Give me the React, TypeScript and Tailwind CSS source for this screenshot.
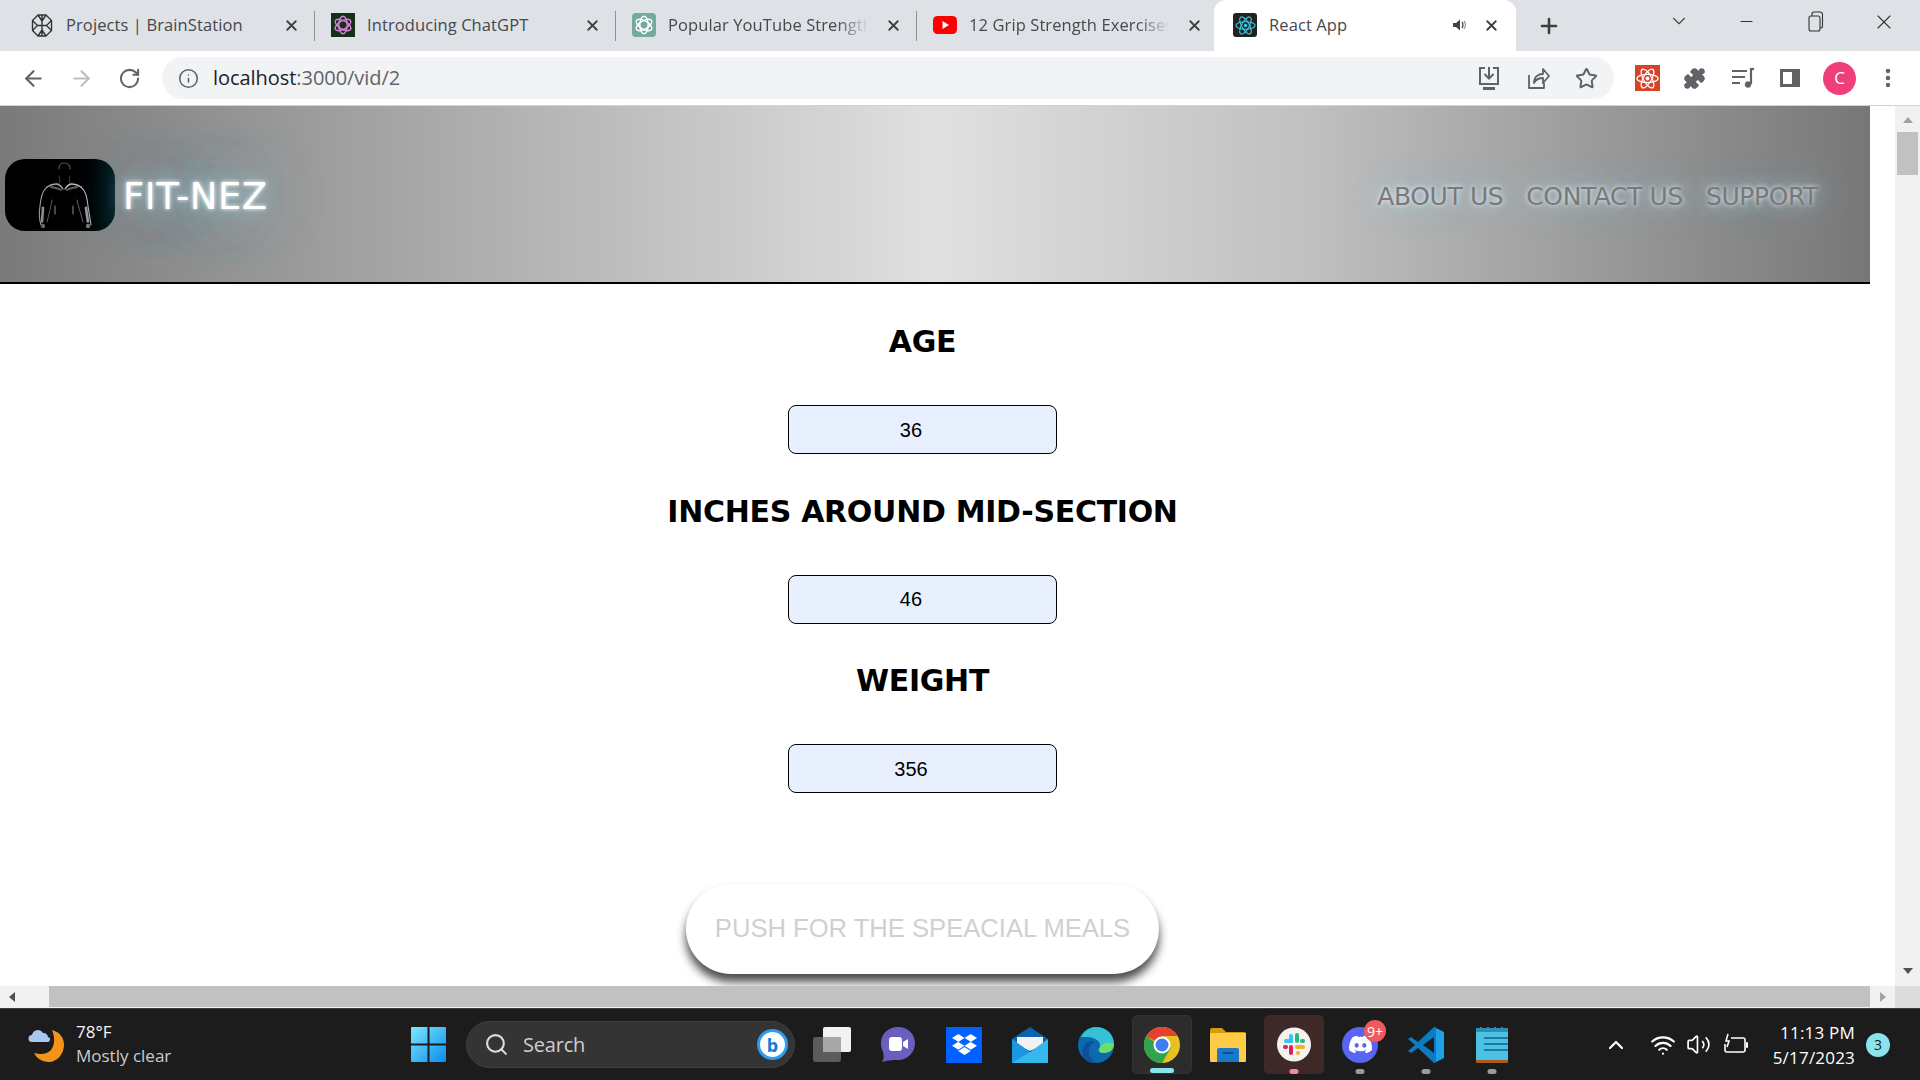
import React from "react";
import { ArrowLeft, ArrowRight, RotateCw, Info, Star, Puzzle, EllipsisVertical, X, Plus, ChevronDown, Minus, Search, ChevronUp, Wifi, Volume2 } from "lucide-react";
import { FaDropbox, FaDiscord } from "react-icons/fa";

function OpenAIKnot({ color, size = 20 }: { color: string; size?: number }) {
  return (
    <svg width={size} height={size} viewBox="0 0 24 24" fill="none" stroke={color} strokeWidth="1.7">
      <ellipse cx="12" cy="12" rx="5" ry="10.5" />
      <ellipse cx="12" cy="12" rx="5" ry="10.5" transform="rotate(60 12 12)" />
      <ellipse cx="12" cy="12" rx="5" ry="10.5" transform="rotate(120 12 12)" />
    </svg>
  );
}

function BrainIcon() {
  return (
    <svg width="25" height="25" viewBox="0 0 24 24" fill="none" stroke="#333" strokeWidth="1.4" strokeLinejoin="round">
      <path d="M8 1.500h8l5.500 5.500v10L16 22.500H8L2.500 17V7z" />
      <path d="M12 1.500v21M8 1.500l4 6 4-6M2.500 7l5 5-5 5M21.500 7l-5 5 5 5M8 22.500l4-6 4 6M7.500 12h9" />
    </svg>
  );
}

function ReactIcon({ size = 17, color = "#3fc3e0" }: { size?: number; color?: string }) {
  return (
    <svg width={size} height={size} viewBox="0 0 24 24" fill="none" stroke={color} strokeWidth="1.3">
      <ellipse cx="12" cy="12" rx="11" ry="4.3" />
      <ellipse cx="12" cy="12" rx="11" ry="4.3" transform="rotate(60 12 12)" />
      <ellipse cx="12" cy="12" rx="11" ry="4.3" transform="rotate(120 12 12)" />
      <circle cx="12" cy="12" r="2" fill={color} stroke="none" />
    </svg>
  );
}

function Tab({ icon, title, active, fade, sound }: { icon: React.ReactNode; title: string; active?: boolean; fade?: boolean; sound?: boolean }) {
  return (
    <div className={`relative flex h-[51px] shrink-0 items-center pb-[1px] ${active ? "w-[302px] rounded-t-[12px] bg-white pl-[19px] pr-[16px]" : "w-[301px] pl-[16px] pr-[15px]"}`}>
      <span className="flex h-[24px] w-[24px] shrink-0 items-center justify-center">{icon}</span>
      <span className={`ml-[12px] min-w-0 flex-1 overflow-hidden whitespace-nowrap text-[16.5px] text-[#45484c] [font-family:'Open_Sans',sans-serif] [letter-spacing:0.1px] ${fade ? "[mask-image:linear-gradient(to_right,black_80%,transparent_95%)]" : ""}`}>{title}</span>
      {sound && (
        <svg className="mr-[9px]" width="16" height="16" viewBox="0 0 16 16" fill="#444">
          <path d="M1 6h3l4-3.500v11L4 10H1z" />
          <path d="M10 5c1.200 1.500 1.200 4.500 0 6" fill="none" stroke="#444" strokeWidth="1.300" />
          <path d="M12 4c1.800 2.200 1.800 5.800 0 8" fill="none" stroke="#999" strokeWidth="1.200" />
        </svg>
      )}
      <X size={17} strokeWidth={2.6} className="ml-[6px] shrink-0 text-[#3c4043]" />
    </div>
  );
}

function TabBar() {
  return (
    <div className="flex h-[51px] shrink-0 items-start bg-[#dee1e6] pl-[14px]">
      <Tab icon={<BrainIcon />} title="Projects | BrainStation" />
      <div className="mt-[11px] h-[30px] w-px shrink-0 -ml-px bg-[#8f9295]" />
      <Tab
        icon={<span className="flex h-[24px] w-[24px] items-center justify-center bg-[#17301a]"><OpenAIKnot color="#d982d8" /></span>}
        title="Introducing ChatGPT"
      />
      <div className="mt-[11px] h-[30px] w-px shrink-0 -ml-px bg-[#8f9295]" />
      <Tab
        icon={<span className="flex h-[24px] w-[24px] items-center justify-center rounded-[4px] bg-[#74aa9c]"><OpenAIKnot color="#fff" /></span>}
        title="Popular YouTube Strength"
        fade
      />
      <div className="mt-[11px] h-[30px] w-px shrink-0 -ml-px bg-[#8f9295]" />
      <Tab
        icon={
          <svg width="24" height="18" viewBox="0 0 24 18">
            <rect width="24" height="18" rx="4.500" fill="#f00" />
            <path d="M9.500 5l6.500 4-6.500 4z" fill="#fff" />
          </svg>
        }
        title="12 Grip Strength Exercises"
        fade
      />
      <div className="-ml-[4px]">
        <Tab
          icon={<span className="flex h-[24px] w-[24px] items-center justify-center rounded-[3px] bg-[#222]"><ReactIcon size={21} /></span>}
          title="React App"
          active
          sound
        />
      </div>
      <Plus size={24} strokeWidth={2.6} className="ml-[21px] mt-[14px] shrink-0 text-[#3c4043]" />
      <ChevronDown size={22} strokeWidth={1.2} className="ml-[107px] mt-[10px] shrink-0 text-[#444]" />
      <Minus size={19} strokeWidth={1.3} className="ml-[47px] mt-[12px] shrink-0 text-[#333]" />
      <svg className="ml-[52px] mt-[11px] shrink-0" width="16" height="22" viewBox="0 0 16 22" fill="none" stroke="#333" strokeWidth="1.100">
        <rect x="1" y="5" width="11" height="15" rx="2" />
        <path d="M4 5V3a2 2 0 0 1 2-2h6a2.500 2.500 0 0 1 2.500 2.500V15a2 2 0 0 1-2 2" />
      </svg>
      <X size={24} strokeWidth={1.1} className="ml-[48px] mt-[10px] shrink-0 text-[#333]" />
    </div>
  );
}

function ToolBar() {
  const g = "#5f6368";
  return (
    <div className="flex h-[54px] shrink-0 items-center bg-white">
      <ArrowLeft size={25} strokeWidth={2} className="ml-[21px] shrink-0 text-[#5f6368]" />
      <ArrowRight size={25} strokeWidth={2} className="ml-[23px] shrink-0 text-[#bcbec1]" />
      <RotateCw size={23} strokeWidth={2.1} className="ml-[24px] shrink-0 text-[#5f6368]" />
      <div className="ml-[21px] flex h-[42px] w-[1452px] shrink-0 items-center rounded-full bg-[#f1f3f4] pl-[16px] pr-[16px]">
        <Info size={21} strokeWidth={1.8} className="shrink-0 text-[#5f6368]" />
        <span className="ml-[14px] text-[20px] text-[#202124] [font-family:'Open_Sans',sans-serif] [letter-spacing:-0.05px]">
          localhost<span className="text-[#5f6368]">:3000/vid/2</span>
        </span>
        <div className="ml-auto flex items-center gap-[25px]">
          <svg width="24" height="26" viewBox="0 0 24 26" fill="none" stroke={g} strokeWidth="2">
            <path d="M8 3H3v16h18V3h-5" />
            <path d="M12 2v11M7.500 9l4.500 4.500L16.500 9" />
            <path d="M6 23.500h12" strokeWidth="3" />
          </svg>
          <svg width="24" height="24" viewBox="0 0 24 24" fill="none" stroke={g} strokeWidth="1.800" strokeLinejoin="round">
            <path d="M3 9v13h15v-5" />
            <path d="M8 17c0-6 4-9 9-9V3l6 7-6 7v-5c-4 0-7 1-9 5z" />
          </svg>
          <Star size={23} strokeWidth={2.1} className="text-[#5f6368]" />
        </div>
      </div>
      <span className="ml-[21px] flex h-[26px] w-[25px] shrink-0 items-center justify-center bg-[#d9412b]">
        <ReactIcon size={23} color="#fff" />
      </span>
      <Puzzle size={23} fill="#5f6368" strokeWidth={1.5} className="ml-[23px] shrink-0 text-[#5f6368]" />
      <svg className="ml-[25px] shrink-0" width="24" height="24" viewBox="0 0 24 24" fill="none" stroke={g} strokeWidth="2.200">
        <path d="M1 5h15M1 11h13M1 17h8" />
        <path d="M20 3v15" />
        <circle cx="17" cy="18.500" r="3" fill={g} strokeWidth="0.500" />
        <path d="M19 3h4" />
      </svg>
      <svg className="ml-[24px] shrink-0" width="22" height="22" viewBox="0 0 22 22">
        <path fillRule="evenodd" fill="#5f6368" d="M1 2h20v18H1zM4 5v12h9V5z" />
      </svg>
      <span className="ml-[22px] flex h-[33px] w-[33px] shrink-0 items-center justify-center rounded-full bg-[#ee3f7b] text-[17px] text-white [font-family:'Open_Sans',sans-serif]">C</span>
      <EllipsisVertical size={24} strokeWidth={2.5} className="ml-[20px] shrink-0 text-[#5f6368]" />
    </div>
  );
}

function LogoMan() {
  return (
    <div className="h-[72px] w-[110px] shrink-0 overflow-hidden rounded-[20px] bg-gradient-to-r from-black from-60% to-[#031f22]">
      <svg width="110" height="72" viewBox="0 0 110 72" fill="none" strokeLinecap="round">
        <path d="M54 10c0-5 3-6 5-6 3 0 6 1 6 6" stroke="#555" strokeWidth="1.200" />
        <path d="M54 17l1 5-2 4M65 17l-1 5 2 4" stroke="#3d3d3d" strokeWidth="1" />
        <path d="M42 28c3-2 6-3 9-3 2 0 5 2 7 5" stroke="#a8a8a8" strokeWidth="1.300" />
        <path d="M76 28c-3-2-6-3-9-3-2 0-5 2-7 5" stroke="#c0c0c0" strokeWidth="1.300" />
        <path d="M46 28c3 1 7 1 10 3M72 28c-3 1-7 1-10 3" stroke="#5c5c5c" strokeWidth="2" />
        <path d="M42 28c-5 4-6 11-7 19-1 6-1 13 1 19" stroke="#9a9a9a" strokeWidth="1.100" />
        <path d="M76 28c5 4 6 11 7 19 1 6 2 13 3 19" stroke="#b5b5b5" strokeWidth="1.100" />
        <path d="M38 49l-1 14" stroke="#8c8c8c" strokeWidth="2.800" strokeDasharray="1 1.500" />
        <path d="M81 49l2 14" stroke="#9a9a9a" strokeWidth="2.800" strokeDasharray="1 1.500" />
        <path d="M47 41c-1 6-3 14-5 22" stroke="#5a5a5a" strokeWidth="1" />
        <path d="M72 41c1 6 4 14 6 22" stroke="#666" strokeWidth="1" />
        <path d="M50 47v8M68 47v8" stroke="#a0a0a0" strokeWidth="0.900" />
        <circle cx="38" cy="67" r="2.200" fill="#666" />
        <circle cx="83" cy="67" r="2.200" fill="#777" />
      </svg>
    </div>
  );
}

function Header() {
  return (
    <header className="flex h-[178px] w-[1870px] shrink-0 items-center justify-between border-b-[2px] border-black bg-[linear-gradient(to_right,#7a7a7a,#e0e0e0_50%,#c0c0c0_70%,#777777)] pb-[4px] pl-[5px] pr-[52px] pt-[5px] [font-family:'DejaVu_Sans',sans-serif]">
      <div className="flex items-center">
        <LogoMan />
        <span className="ml-[8px] mt-[4px] text-[37px] text-white [letter-spacing:0.5px] [text-shadow:0_0_4px_#ffffff,0_0_20px_#a8d8e8,0_0_60px_#6fa0b0,0_0_60px_#6fa0b0]">FIT-NEZ</span>
      </div>
      <nav className="mt-[4px] flex gap-[23px] text-[25px] text-[#7d7878] [letter-spacing:-0.4px] [text-shadow:0_0_5px_#e8f4f8,0_0_20px_#a8d4e6,0_0_50px_#8fbfd0]">
        <span>ABOUT US</span>
        <span>CONTACT US</span>
        <span>SUPPORT</span>
      </nav>
    </header>
  );
}

function Field({ label, value }: { label: string; value: string }) {
  return (
    <div className="flex h-[169.500px] shrink-0 flex-col items-center">
      <h2 className="flex h-[60px] items-end text-[30px] font-bold leading-[36px] text-black [font-family:'DejaVu_Sans',sans-serif] [letter-spacing:-0.3px]">{label}</h2>
      <div className="mt-[45px] flex h-[49px] w-[269px] items-center justify-center rounded-[8px] border border-black bg-[#e8f0fe] pr-[23px] text-[20px] text-black [font-family:'Liberation_Sans',sans-serif]">{value}</div>
    </div>
  );
}

function Page() {
  return (
    <div className="flex min-w-0 flex-1 flex-col overflow-hidden bg-white">
      <Header />
      <div className="flex w-[1845px] flex-col items-center">
        <div className="flex flex-col pt-[16px]">
          <Field label="AGE" value="36" />
          <Field label="INCHES AROUND MID-SECTION" value="46" />
          <Field label="WEIGHT" value="356" />
        </div>
        <button className="mt-[75px] flex h-[90px] w-[473px] shrink-0 items-center justify-center rounded-full bg-white text-[25.6px] text-[#d0d0d0] shadow-[0_8px_10px_rgba(0,0,0,0.7)] [font-family:'Liberation_Sans',sans-serif]">
          PUSH FOR THE SPEACIAL MEALS
        </button>
      </div>
    </div>
  );
}

function VScrollbar() {
  return (
    <div className="flex w-[25px] shrink-0 flex-col items-center bg-[#f1f1f1]">
      <div className="mt-[11px] h-0 w-0 border-x-[5px] border-b-[6px] border-x-transparent border-b-[#a3a3a3]" />
      <div className="mt-[9px] h-[43px] w-[21px] shrink-0 bg-[#c1c1c1]" />
      <div className="mt-auto mb-[12px] h-0 w-0 border-x-[5px] border-t-[6px] border-x-transparent border-t-[#505050]" />
    </div>
  );
}

function HScrollbar() {
  return (
    <div className="flex h-[22px] shrink-0 items-stretch bg-[#f1f1f1]">
      <div className="flex w-[49px] shrink-0 items-center pl-[9px]">
        <div className="h-0 w-0 border-y-[5px] border-r-[6px] border-y-transparent border-r-[#505050]" />
      </div>
      <div className="mb-px w-[1821px] shrink-0 bg-[#c1c1c1]" />
      <div className="flex w-[25px] shrink-0 items-center pl-[10px]">
        <div className="h-0 w-0 border-y-[5px] border-l-[6px] border-y-transparent border-l-[#a3a3a3]" />
      </div>
      <div className="w-[25px] shrink-0 bg-[#dcdcdc]" />
    </div>
  );
}

function Weather() {
  return (
    <svg width="36" height="34" viewBox="0 0 36 34">
      <path d="M24 2c8 2 12 8 12 15 0 9-7 17-15 17-6 0-12-3-15-9 8 2 13 1 17-3 4-5 4-13 1-20z" fill="#f2941c" />
      <path d="M4 14a3.500 3.500 0 0 1 0-7 6 6 0 0 1 11-2 4.500 4.500 0 0 1 5 4 2.500 2.500 0 0 1-1 5z" fill="#a9c8f0" />
    </svg>
  );
}

function WinLogo() {
  return (
    <svg width="35" height="35" viewBox="0 0 35 35">
      <defs>
        <linearGradient id="w" x1="0" y1="0" x2="1" y2="1">
          <stop offset="0" stopColor="#7ce8fb" />
          <stop offset="1" stopColor="#0a8cf0" />
        </linearGradient>
      </defs>
      <path fill="url(#w)" d="M0 1a1 1 0 0 1 1-1h15.500v16.500H0zM18.500 0H34a1 1 0 0 1 1 1v15.500H18.500zM0 18.500h16.500V35H1a1 1 0 0 1-1-1zM18.500 18.500H35V34a1 1 0 0 1-1 1H18.500z" />
    </svg>
  );
}

function TaskView() {
  return (
    <svg width="38" height="35" viewBox="0 0 38 35">
      <rect x="0" y="10" width="28" height="25" rx="3" fill="#5c5c5c" />
      <rect x="10" y="0" width="28" height="25" rx="2" fill="#f2f2f2" />
      <rect x="10" y="10" width="18" height="15" fill="#a8a8a8" />
    </svg>
  );
}

function Teams() {
  return (
    <svg width="34" height="35" viewBox="0 0 34 35">
      <path d="M17 0c10 0 17 7 17 16 0 10-8 17-17 17-4 0-9 0-16 2 2-3 2-6 1-10C0 21 0 18 0 16 0 7 7 0 17 0z" fill="#6a5fbf" />
      <rect x="8" y="10" width="13" height="14" rx="3" fill="#fff" />
      <path d="M22 15l5-3v10l-5-3z" fill="#fff" />
    </svg>
  );
}

function Mail() {
  return (
    <svg width="36" height="36" viewBox="0 0 36 36">
      <path d="M0 12L18 0l18 12v6H0z" fill="#0b63b0" />
      <path d="M5 10h26v8L18 24 5 18z" fill="#f2f2f2" />
      <path d="M0 12l18 13 18-13v24H0z" fill="#35b8ee" />
      <path d="M0 36V12l18 13z" fill="#1c96e0" />
    </svg>
  );
}

function Edge() {
  return (
    <svg width="36" height="36" viewBox="0 0 36 36">
      <circle cx="18" cy="18" r="18" fill="#0c69b0" />
      <path d="M3 10C7 2 14 0 18 0c10 0 18 7 18 17 0 5-4 9-10 9-4 0-6-2-5-4 2-3 1-7-2-9-6-4-12-3-16-3z" fill="#36c2d4" />
      <path d="M36 17c0 5-4 9-10 9-4 0-6-2-5-4 2-3 5-9 15-5z" fill="#6fdc6a" />
      <path d="M14 36c-7-1-11-8-9-15 2-5 7-8 12-6-5 2-7 6-6 11 1 4 3 8 8 10z" fill="#0f4f9a" />
    </svg>
  );
}

function Chrome() {
  return (
    <svg width="36" height="36" viewBox="0 0 36 36">
      <circle cx="18" cy="18" r="18" fill="#e8c01f" />
      <path d="M18 18L2.400 9A18 18 0 0 1 33.600 9H18z" fill="#e5412f" />
      <path d="M2.400 9A18 18 0 0 0 18 36l9-15.600H18z" fill="#2ea44f" />
      <path d="M2.400 9L11 24h7z" fill="#2ea44f" />
      <circle cx="18" cy="18" r="8.500" fill="#fff" />
      <circle cx="18" cy="18" r="6.500" fill="#3d7ef0" />
    </svg>
  );
}

function Folder() {
  return (
    <svg width="36" height="36" viewBox="0 0 36 36">
      <path d="M0 3a2 2 0 0 1 2-2h10l4 4h18a2 2 0 0 1 2 2v4H0z" fill="#d99a0b" />
      <rect y="6" width="36" height="29" rx="1" fill="#fdcb47" />
      <path d="M7 35V23a2 2 0 0 1 2-2h18a2 2 0 0 1 2 2v12z" fill="#1879c9" />
      <rect x="13" y="25" width="10" height="2" fill="#0c4f8c" />
    </svg>
  );
}

function Slack() {
  return (
    <svg width="34" height="35" viewBox="0 0 34 35">
      <circle cx="17" cy="17.500" r="17" fill="#f2f2ee" />
      <g strokeWidth="4" strokeLinecap="round" fill="none">
        <path d="M14 9v5H9" stroke="#36c5f0" />
        <path d="M20 8v6" stroke="#2eb67d" />
        <path d="M25 14h1" stroke="#2eb67d" />
        <path d="M20 20h6" stroke="#ecb22e" />
        <path d="M21 26v0" stroke="#ecb22e" />
        <path d="M14 20v6" stroke="#e01e5a" />
        <path d="M8 20h1" stroke="#e01e5a" />
      </g>
    </svg>
  );
}

function VSCode() {
  return (
    <svg width="36" height="36" viewBox="0 0 36 36">
      <path d="M26 0l10 5v26l-10 5V0z" fill="#1e9fe8" />
      <path d="M26 0L10 15 3 10 0 12l7 6-7 6 3 2 7-5 16 15 2-1V1z" fill="#0b7bc4" />
      <path d="M26 10v16l-11-8z" fill="#1c1c1c" />
    </svg>
  );
}

function Notepad() {
  return (
    <svg width="32" height="36" viewBox="0 0 32 36">
      <rect y="1" width="32" height="35" rx="1" fill="#a85a16" />
      <rect y="1" width="32" height="32" fill="#4cc1e4" />
      <rect y="1" width="32" height="4" fill="#2a8fb8" />
      <path d="M5 0v3M12 0v3M19 0v3M26 0v3" stroke="#2a8fb8" strokeWidth="2" />
      <path d="M8 11h24M8 17h24M8 23h24" stroke="#1b7aa0" strokeWidth="2" />
    </svg>
  );
}

function TaskItem({ children, tile, dot, badge }: { children: React.ReactNode; tile?: string; dot?: string; badge?: boolean }) {
  return (
    <div className={`relative flex h-[59px] w-[60px] shrink-0 items-center justify-center rounded-[5px] ${tile ?? ""}`}>
      {children}
      {badge && (
        <span className="absolute left-[34px] top-[5px] flex h-[22px] w-[22px] items-center justify-center rounded-full bg-[#ef5a5f] text-[14px] text-white [font-family:'Open_Sans',sans-serif]">9+</span>
      )}
      {dot && <span className={`absolute bottom-[0px] left-1/2 h-[5px] -translate-x-1/2 rounded-full ${dot}`} />}
    </div>
  );
}

function TaskBar() {
  return (
    <div className="flex h-[72px] shrink-0 items-center border-t-[1px] border-[#3a3a3a] bg-[#1c1c1c] pl-[28px] text-white [font-family:'Open_Sans',sans-serif]">
      <Weather />
      <div className="ml-[12px] -mt-[2px] flex w-[100px] shrink-0 flex-col text-[17px] leading-[24px]">
        <span className="text-[#f5f5f5]">78°F</span>
        <span className="text-[#cccccc]">Mostly clear</span>
      </div>
      <div className="ml-[235px] shrink-0"><WinLogo /></div>
      <div className="ml-[20px] flex h-[47px] w-[329px] shrink-0 items-center rounded-full border border-[#3f3f3f] bg-[#343434] pl-[17px] pr-[6px]">
        <Search size={25} strokeWidth={2} className="shrink-0 text-[#dddddd]" />
        <span className="ml-[14px] text-[20px] text-[#cfcfcf] [letter-spacing:-0.2px]">Search</span>
        <span className="relative ml-auto flex h-[31px] w-[31px] items-center justify-center rounded-full border-[3px] border-[#2d9cf0] bg-white text-[18px] font-bold leading-none text-[#1577d8]">b</span>
      </div>
      <div className="ml-[7px] flex shrink-0 gap-[6px]">
        <TaskItem><TaskView /></TaskItem>
        <TaskItem><Teams /></TaskItem>
        <TaskItem>
          <span className="flex h-[36px] w-[36px] items-center justify-center bg-[#0061fe]"><FaDropbox size={25} color="#fff" /></span>
        </TaskItem>
        <TaskItem><Mail /></TaskItem>
        <TaskItem><Edge /></TaskItem>
        <TaskItem tile="bg-[#2c2c2c] border border-[#333333]" dot="w-[24px] bg-[#8ae4ee]"><Chrome /></TaskItem>
        <TaskItem><Folder /></TaskItem>
        <TaskItem tile="bg-[#3e2828]" dot="w-[9px] bg-[#f38a9a]"><Slack /></TaskItem>
        <TaskItem badge dot="w-[9px] bg-[#9a9a9a]">
          <span className="flex h-[36px] w-[36px] items-center justify-center rounded-full bg-[#5865f2]"><FaDiscord size={25} color="#fff" /></span>
        </TaskItem>
        <TaskItem dot="w-[9px] bg-[#9a9a9a]"><VSCode /></TaskItem>
        <TaskItem dot="w-[9px] bg-[#9a9a9a]"><Notepad /></TaskItem>
      </div>
      <ChevronUp size={24} strokeWidth={2.2} className="ml-[82px] shrink-0 text-white" />
      <Wifi size={26} strokeWidth={2} className="ml-[22px] shrink-0 text-white" />
      <Volume2 size={25} strokeWidth={1.6} className="ml-[10px] shrink-0 text-white" />
      <svg className="ml-[12px] shrink-0" width="25" height="24" viewBox="0 0 25 24" fill="none" stroke="#fff" strokeWidth="1.600">
        <path d="M8 5h12a2 2 0 0 1 2 2v10a2 2 0 0 1-2 2H4a2 2 0 0 1-2-2V11" />
        <path d="M23 10h2v4h-2" fill="#fff" />
        <path d="M5 1L3 8h3l-2 6" />
      </svg>
      <div className="ml-[9px] flex w-[98px] shrink-0 flex-col items-end text-[17px] leading-[25px] text-white [letter-spacing:0.2px]">
        <span>11:13 PM</span>
        <span>5/17/2023</span>
      </div>
      <span className="ml-[11px] flex h-[24px] w-[24px] shrink-0 items-center justify-center rounded-full bg-[#8ae4ee] text-[14px] text-[#1c1c1c]">3</span>
    </div>
  );
}

export default function App() {
  return (
    <div className="flex h-[1080px] w-[1920px] flex-col overflow-hidden bg-white">
      <TabBar />
      <ToolBar />
      <div className="h-px shrink-0 bg-[#d4d4d4]" />
      <div className="flex min-h-0 flex-1">
        <Page />
        <VScrollbar />
      </div>
      <HScrollbar />
      <TaskBar />
    </div>
  );
}
